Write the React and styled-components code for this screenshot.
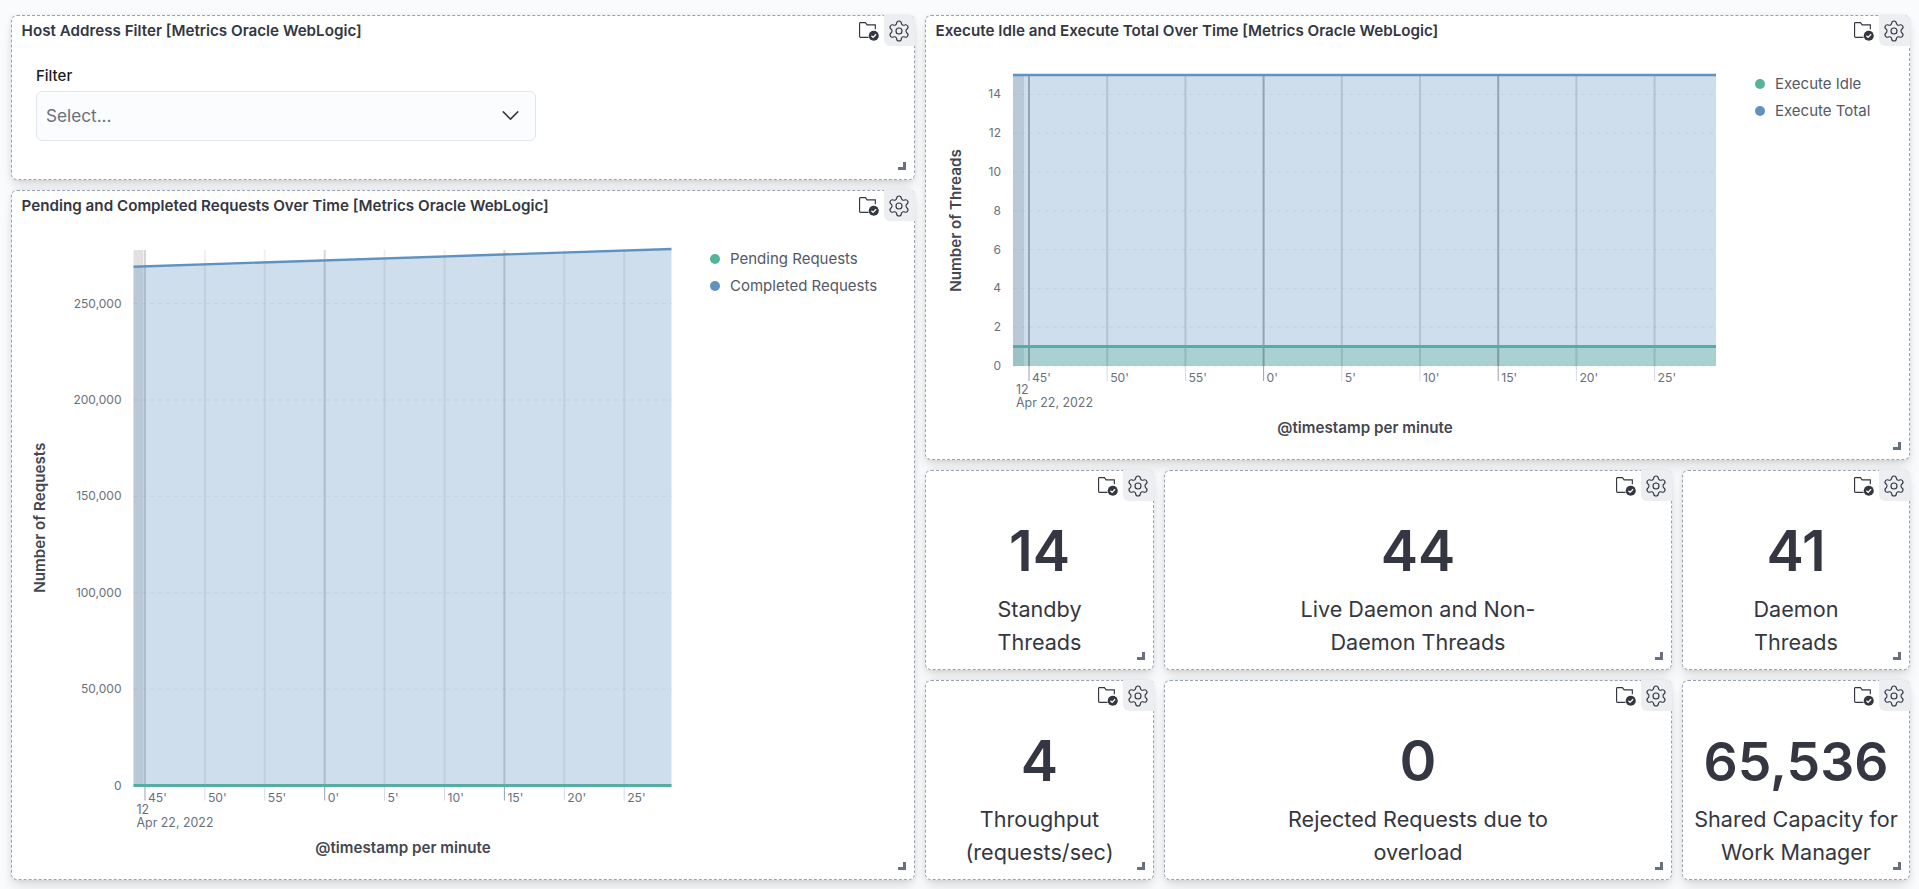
import React from 'react';
import styled, { createGlobalStyle } from 'styled-components';
import { Settings, ChevronDown } from 'lucide-react';

const colors = {
  text: '#343741',
  subdued: '#69707d',
  blue: '#6092c0',
  green: '#54b399',
  teal: '#57ada2',
};

const GlobalStyle = createGlobalStyle`
  html, body {
    margin: 0;
    background: #fafbfd;
    font-family: Inter, "Noto Sans", sans-serif;
    color: ${colors.text};
  }
`;

const Page = styled.div`
  display: grid;
  grid-template-columns: 904px 985px;
  gap: 10px;
  padding: 15px 9px 9px 11px;
  height: 889px;
  box-sizing: border-box;
  overflow: hidden;
`;

const Column = styled.div`
  display: flex;
  flex-direction: column;
  gap: 10px;
`;

const Panel = styled.section`
  position: relative;
  box-sizing: border-box;
  height: ${props => props.height}px;
  background: #fff;
  border: 1px dashed #98a2b3;
  border-radius: 6px;
  box-shadow: 0 0.9px 4px -1px rgba(0, 0, 0, 0.08), 0 2.6px 8px -1px rgba(0, 0, 0, 0.06),
    0 5.7px 12px -1px rgba(0, 0, 0, 0.05), 0 15px 15px -1px rgba(0, 0, 0, 0.04);
`;

const PanelTitle = styled.h2`
  margin: 0;
  height: 32px;
  padding: 0 0 0 9.6px;
  font-size: 15.2px;
  font-weight: 600;
  line-height: 30px;
  color: ${colors.text};
`;

const Actions = styled.div`
  position: absolute;
  top: -1px;
  right: -1px;
  display: flex;
  align-items: center;
`;

const FolderButton = styled.div`
  display: flex;
  width: 21px;
  height: 30px;
  margin-right: 5px;
  align-items: center;
`;

const GearButton = styled.div`
  display: flex;
  box-sizing: border-box;
  width: 31px;
  height: 31px;
  padding-right: 2px;
  align-items: center;
  justify-content: center;
  background: #eceef1;
  border-radius: 0 6px 0 6px;
  color: ${colors.text};
`;

const ResizeHandle = styled.span`
  position: absolute;
  right: 8px;
  bottom: 9px;
  width: 5px;
  height: 5px;
  border-right: 3px solid ${colors.subdued};
  border-bottom: 3px solid ${colors.subdued};
`;

const FilterBody = styled.div`
  padding: 19px 0 0 24px;
`;

const FilterLabel = styled.label`
  display: block;
  font-size: 15px;
  font-weight: 500;
  line-height: 18px;
  margin-bottom: 6px;
  color: #1a1c21;
`;

const SelectBox = styled.div`
  display: flex;
  box-sizing: border-box;
  width: 500px;
  height: 50px;
  padding: 0 10px 2px 9px;
  align-items: center;
  justify-content: space-between;
  background: #fbfcfd;
  border: 1px solid #e3e6ef;
  border-radius: 6px;
  font-size: 17.2px;
  color: ${colors.subdued};
`;

const ChartBody = styled.div`
  display: flex;
`;

const ChartSvg = styled.svg`
  flex: none;
  display: block;
  font-family: Inter, sans-serif;
`;

const Legend = styled.ul`
  list-style: none;
  margin: 0;
  padding: 22px 0 0 0;
`;

const LegendItem = styled.li`
  display: flex;
  height: 27px;
  align-items: center;
  gap: 10px;
  font-size: 15px;
  color: #535966;
`;

const LegendDot = styled.span`
  width: 10px;
  height: 10px;
  border-radius: 50%;
  background: ${props => props.color};
`;

const StatGrid = styled.div`
  display: grid;
  grid-template-columns: 229px 508px 228px;
  grid-auto-rows: 200px;
  gap: 10px;
`;

const StatBody = styled.div`
  display: flex;
  height: 100%;
  flex-direction: column;
  align-items: center;
  padding-top: 46px;
  box-sizing: border-box;
`;

const StatValue = styled.div`
  font-size: ${props => (props.long ? 53.5 : 56)}px;
  font-weight: 600;
  line-height: 69px;
  color: ${colors.text};
`;

const StatLabel = styled.div`
  margin-top: 7px;
  font-size: 21.6px;
  font-weight: 400;
  line-height: 33px;
  text-align: center;
  white-space: pre-line;
  color: ${colors.text};
`;

const FolderCheck = () => (
  <svg width="21" height="21" viewBox="0 0 20 20" fill="none">
    <path
      d="M1.5 2.5h5.6l1.6 2.2h7.8v4M10 16.5H2.5a1 1 0 0 1-1-1v-13"
      stroke={colors.text}
      strokeWidth="1.1"
    />
    <circle cx="15" cy="15" r="4.8" fill={colors.text} />
    <path d="M12.8 15l1.6 1.6 2.8-3" stroke="#fff" strokeWidth="1.2" fill="none" />
  </svg>
);

const PanelActions = () => (
  <Actions>
    <FolderButton><FolderCheck /></FolderButton>
    <GearButton><Settings size={24} strokeWidth={1.15} /></GearButton>
  </Actions>
);

const minutes = ["45'", "50'", "55'", "0'", "5'", "10'", "15'", "20'", "25'"];
const strongTicks = [0, 3, 6];

// plot sizes are in the svg's own coordinates
const AreaChart = ({ width, height, plot, firstTick, tickStep, yTicks, totalStart, totalEnd, idleY, yTitle, yTitleX, xTitleX, xTitleY, strong, light, bandW }) => {
  const bottom = plot.y + plot.h;
  const right = plot.x + plot.w;
  const idle = idleY === undefined ? bottom : idleY;
  return (
    <ChartSvg width={width} height={height}>
      <rect x={plot.x} y={plot.y} width={bandW} height={plot.h} fill={colors.text} opacity="0.15" />
      <polygon
        points={`${plot.x},${totalStart} ${right},${totalEnd} ${right},${bottom} ${plot.x},${bottom}`}
        fill={colors.blue}
        opacity="0.3"
      />
      {idle !== bottom && (
        <rect x={plot.x} y={idle} width={plot.w} height={bottom - idle} fill={colors.green} opacity="0.3" />
      )}
      {yTicks.map(t => (
        <line key={t.label} x1={plot.x} x2={right} y1={t.y} y2={t.y} stroke={colors.text} strokeOpacity="0.07" strokeDasharray="4 4" />
      ))}
      {minutes.map((m, i) => {
        const x = firstTick + tickStep * i;
        const isStrong = strongTicks.includes(i);
        return (
          <g key={m}>
            <line x1={x} x2={x} y1={plot.y} y2={bottom} stroke={colors.text} strokeOpacity={isStrong ? strong : light} strokeWidth="2" />
            <line x1={x} x2={x} y1={bottom} y2={bottom + 15} stroke={isStrong ? '#98a2b3' : '#d3dae6'} />
            <text x={x + 3} y={bottom + 16} fontSize="12.2" fill={colors.subdued}>{m}</text>
          </g>
        );
      })}
      <line x1={plot.x} x2={right} y1={totalStart} y2={totalEnd} stroke={colors.blue} strokeWidth="2.4" />
      <line x1={plot.x} x2={right} y1={idle} y2={idle} stroke={colors.teal} strokeWidth="3" />
      {yTicks.map(t => (
        <text key={t.label} x={plot.x - 12} y={t.y + 4} textAnchor="end" fontSize="12" fill={colors.subdued}>{t.label}</text>
      ))}
      <text x={plot.x + 3} y={bottom + 28} fontSize="12.4" fill={colors.subdued}>12</text>
      <text x={plot.x + 3} y={bottom + 41} fontSize="12.4" fill={colors.subdued}>Apr 22, 2022</text>
      <text x={xTitleX} y={xTitleY} textAnchor="middle" fontSize="15.2" fontWeight="600" fill="#44474f">@timestamp per minute</text>
      <text
        transform={`translate(${yTitleX} ${plot.y + plot.h / 2}) rotate(-90)`}
        textAnchor="middle"
        fontSize="15.2"
        fontWeight="600"
        fill="#44474f"
      >
        {yTitle}
      </text>
    </ChartSvg>
  );
};

const requestTicks = ['0', '50,000', '100,000', '150,000', '200,000', '250,000'].map((label, i) => ({ label, y: 562.5 - 96.4 * i }));
const threadTicks = [0, 2, 4, 6, 8, 10, 12, 14].map(n => ({ label: String(n), y: 318 - 19.4 * n }));

const stats = [
  { value: '14', label: 'Standby\nThreads' },
  { value: '44', label: 'Live Daemon and Non-\nDaemon Threads' },
  { value: '41', label: 'Daemon\nThreads' },
  { value: '4', label: 'Throughput\n(requests/sec)' },
  { value: '0', label: 'Rejected Requests due to\noverload' },
  { value: '65,536', label: 'Shared Capacity for\nWork Manager', long: true },
];

const App = () => {
  return (
    <Page>
      <GlobalStyle />
      <Column>
        <Panel height={165}>
          <PanelActions />
          <PanelTitle>Host Address Filter [Metrics Oracle WebLogic]</PanelTitle>
          <FilterBody>
            <FilterLabel>Filter</FilterLabel>
            <SelectBox>
              Select...
              <ChevronDown size={29} strokeWidth={1.2} color={colors.text} />
            </SelectBox>
          </FilterBody>
          <ResizeHandle />
        </Panel>
        <Panel height={690}>
          <PanelActions />
          <PanelTitle>Pending and Completed Requests Over Time [Metrics Oracle WebLogic]</PanelTitle>
          <ChartBody>
            <AreaChart
              width={698}
              height={640}
              plot={{ x: 121.5, y: 27, w: 538, h: 535.5 }}
              firstTick={133}
              tickStep={59.9}
              yTicks={requestTicks}
              totalStart={43.7}
              totalEnd={26}
              yTitle="Number of Requests"
              yTitleX={33}
              xTitleX={391}
              xTitleY={630}
              strong={0.2}
              light={0.08}
              bandW={10}
            />
            <Legend>
              <LegendItem><LegendDot color={colors.green} />Pending Requests</LegendItem>
              <LegendItem><LegendDot color={colors.blue} />Completed Requests</LegendItem>
            </Legend>
          </ChartBody>
          <ResizeHandle />
        </Panel>
      </Column>
      <Column>
        <Panel height={445}>
          <PanelActions />
          <PanelTitle>Execute Idle and Execute Total Over Time [Metrics Oracle WebLogic]</PanelTitle>
          <ChartBody>
            <AreaChart
              width={829}
              height={400}
              plot={{ x: 87, y: 27, w: 703, h: 291 }}
              firstTick={103}
              tickStep={78.2}
              yTicks={threadTicks}
              totalStart={27}
              totalEnd={27}
              idleY={298.6}
              yTitle="Number of Threads"
              yTitleX={35}
              xTitleX={439}
              xTitleY={385}
              strong={0.35}
              light={0.16}
              bandW={11}
            />
            <Legend>
              <LegendItem><LegendDot color={colors.green} />Execute Idle</LegendItem>
              <LegendItem><LegendDot color={colors.blue} />Execute Total</LegendItem>
            </Legend>
          </ChartBody>
          <ResizeHandle />
        </Panel>
        <StatGrid>
          {stats.map(s => (
            <Panel key={s.label} height={200}>
              <PanelActions />
              <StatBody>
                <StatValue long={s.long}>{s.value}</StatValue>
                <StatLabel>{s.label}</StatLabel>
              </StatBody>
              <ResizeHandle />
            </Panel>
          ))}
        </StatGrid>
      </Column>
    </Page>
  );
};

export default App;
